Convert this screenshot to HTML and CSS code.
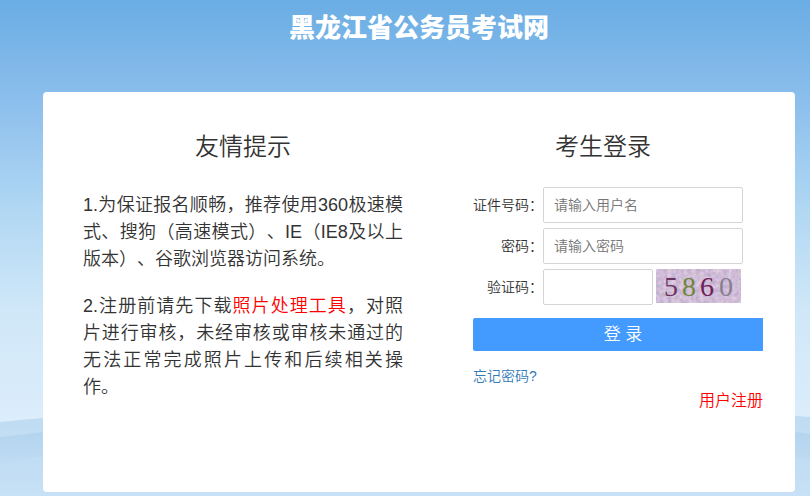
FILE: index.html
```html
<!DOCTYPE html>
<html lang="zh-CN">

<head>
    <meta charset="UTF-8">
    <meta name="viewport" content="width=device-width, initial-scale=1.0">
    <title>黑龙江省公务员考试网</title>
    <link rel="stylesheet" href="styles.css">
</head>

<body>
    <!-- waves at the bottom of the page -->
    <svg class="waves" viewBox="0 0 810 100" preserveAspectRatio="none" aria-hidden="true">
        <defs>
            <linearGradient id="back" x1="0" y1="0" x2="0" y2="1">
                <stop offset="0" stop-color="#bcdaf2" />
                <stop offset="1" stop-color="#cfe5f7" />
            </linearGradient>
            <linearGradient id="front" x1="0" y1="0" x2="0" y2="1">
                <stop offset="0" stop-color="#aed1ed" />
                <stop offset="1" stop-color="#cbe2f6" />
            </linearGradient>
        </defs>
        <path fill="url(#back)" d="M0 26 Q20 24 43 22 Q400 -5 795 20 L810 21 V100 H0Z" />
        <path fill="url(#front)" d="M0 41 Q20 39 43 36 Q400 5 795 36 L810 38 V100 H0Z" />
        <path fill="#c4dff5" fill-opacity=".5" d="M0 68 Q20 62 43 61 Q400 45 795 61 L810 63 V100 H0Z" />
    </svg>

    <div class="container">
        <h1>黑龙江省公务员考试网</h1>
        <div class="box">
            <div class="tips">
                <h2>友情提示</h2>
                <p>1.为保证报名顺畅，推荐使用360极速模式、搜狗（高速模式）、IE（IE8及以上版本）、谷歌浏览器访问系统。</p>
                <p>2.注册前请先下载<a class="red" href="#">照片处理工具</a>，对照片进行审核，未经审核或审核未通过的无法正常完成照片上传和后续相关操作。</p>
            </div>
            <div class="login">
                <h2>考生登录</h2>
                <form>
                    <div class="row">
                        <label for="username">证件号码：</label>
                        <input type="text" id="username" placeholder="请输入用户名">
                    </div>
                    <div class="row">
                        <label for="password">密码：</label>
                        <input type="password" id="password" placeholder="请输入密码">
                    </div>
                    <div class="row">
                        <label for="code">验证码：</label>
                        <input type="text" id="code" class="code">
                        <svg class="captcha" viewBox="0 0 85 34" role="img" aria-label="验证码">
                            <filter id="noise" x="0" y="0" width="1" height="1" color-interpolation-filters="sRGB">
                                <feTurbulence type="fractalNoise" baseFrequency="0.25" numOctaves="2" seed="4" />
                                <feColorMatrix values="0.25 0 0 0 0.69  0.2 0.1 0 0 0.59  0.15 0 0.1 0 0.72  0 0 0 0 1" />
                            </filter>
                            <rect width="85" height="34" fill="#cfbfd9" />
                            <rect width="85" height="34" filter="url(#noise)" />
                            <text x="8" y="27" fill="#6b3560">5</text>
                            <text x="26" y="27" fill="#708638">8</text>
                            <text x="44" y="27" fill="#6e1f58">6</text>
                            <text x="63" y="27" fill="#85808f">0</text>
                        </svg>
                    </div>
                    <button type="submit" class="submit">登 录</button>
                </form>
                <a class="forget" href="#">忘记密码?</a>
                <a class="register red" href="#">用户注册</a>
            </div>
        </div>
    </div>
</body>

</html>
```
FILE: styles.css
```css
* {
    box-sizing: border-box;
}

body {
    margin: 0;
    min-height: 100vh;
    position: relative;
    font-family: "Liberation Sans", "Noto Sans CJK SC", sans-serif;
    font-size: 14px;
    font-weight: 350;
    line-height: 20px;
    text-spacing-trim: space-all;
    color: #333;
    background: linear-gradient(#6aade4, #8bbeec 20%, #b0d7f3 42%, #cfe7f8 62%, #dcedfb 85%, #cfe5f7);
}

a {
    color: #337ab7;
    text-decoration: none;
}

a.red {
    color: #f00;
}

.waves {
    position: absolute;
    left: 0;
    bottom: 0;
    width: 100%;
    height: 100px;
}

.container {
    position: relative;
    padding: 10px 15px 4px 43px;
}

h1 {
    margin: 0 0 46px;
    font-size: 26px;
    font-weight: 900;
    line-height: 36px;
    text-align: center;
    color: #fff;
}

.box {
    display: grid;
    grid-template-columns: 1fr 1fr;
    gap: 40px;
    min-height: 400px;
    padding: 40px 32px 40px 40px;
    border-radius: 4px;
    background-color: #fff;
}

h2 {
    margin: 0;
    font-size: 24px;
    line-height: 30px;
    font-weight: 350;
    text-align: center;
}

.tips h2 {
    margin-bottom: 30px;
}

.tips p {
    margin: 0 0 20px;
    font-size: 18px;
    line-height: 27px;
    text-align: justify;
}

.login {
    display: flex;
    flex-direction: column;
}

.login h2 {
    margin-bottom: 25px;
}

form {
    padding-left: 30px;
}

.row {
    display: flex;
    align-items: center;
    margin-bottom: 5px;
}

.row label {
    width: 70px;
    text-align: right;
    white-space: nowrap;
}

.row input {
    width: 200px;
    height: 36px;
    padding: 0 10px;
    border: 1px solid #d5d5d5;
    border-radius: 2px;
    font: inherit;
}

.row input::placeholder {
    color: #757575;
}

.row .code {
    width: 110px;
}

.captcha {
    align-self: flex-start;
    width: 85px;
    height: 34px;
    margin-left: 3px;
    font-family: "Liberation Serif", serif;
    font-size: 28px;
}

.submit {
    width: 100%;
    height: 33px;
    margin-top: 8px;
    padding: 0 0 0 10px;
    border: 0;
    border-radius: 2px 0 0 2px;
    background-color: #439aff;
    color: #fff;
    font: inherit;
    font-size: 17px;
}

.forget {
    align-self: flex-start;
    margin: 15px 0 5px 30px;
}

.register {
    align-self: flex-end;
    font-size: 16px;
}
```
